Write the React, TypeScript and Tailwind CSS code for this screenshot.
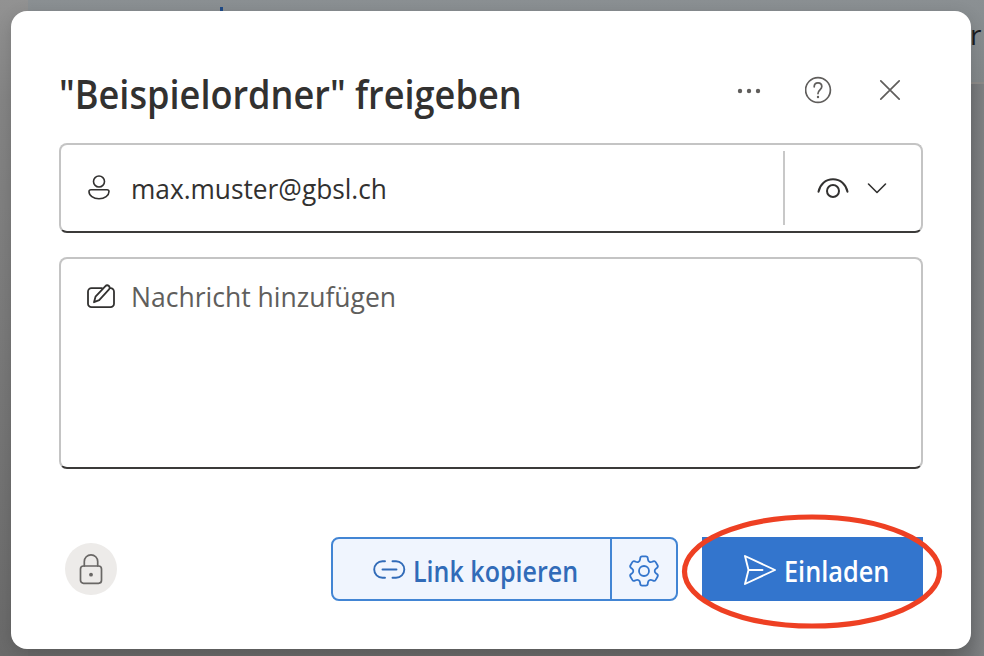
import type { ReactNode } from "react";

type IconProps = { children: ReactNode; className?: string; width: number; height: number; stroke?: number };

function Icon({ children, className = "", width, height, stroke = 1.6 }: IconProps) {
  return (
    <svg
      width={width}
      height={height}
      viewBox={`0 0 ${width} ${height}`}
      fill="none"
      stroke="currentColor"
      strokeWidth={stroke}
      strokeLinecap="round"
      strokeLinejoin="round"
      className={`block shrink-0 ${className}`}
    >
      {children}
    </svg>
  );
}

// Outline of a six-tooth gear with softened corners.
function gearPath(c: number) {
  const pts: [number, number][] = [];
  for (let k = 0; k < 6; k++) {
    for (const [r, d] of [[10.8, -22], [15, -14], [15, 14], [10.8, 22]]) {
      const a = ((k * 60 - 90 + d) * Math.PI) / 180;
      pts.push([c + r * Math.cos(a), c + r * Math.sin(a)]);
    }
  }
  const toward = (p: [number, number], q: [number, number]) => {
    const l = Math.hypot(q[0] - p[0], q[1] - p[1]);
    const t = Math.min(1.8, l / 2) / l;
    return `${(p[0] + (q[0] - p[0]) * t).toFixed(2)} ${(p[1] + (q[1] - p[1]) * t).toFixed(2)}`;
  };
  return (
    pts
      .map((p, i) => {
        const prev = pts[(i + pts.length - 1) % pts.length];
        const next = pts[(i + 1) % pts.length];
        return `${i ? "L" : "M"}${toward(p, prev)}Q${p[0].toFixed(2)} ${p[1].toFixed(2)} ${toward(p, next)}`;
      })
      .join("") + "Z"
  );
}

function Header() {
  return (
    <header className="flex h-[84px] items-start justify-between">
      <h1 className="mt-[7px] w-[470px] origin-left scale-x-[0.903] text-[40px] leading-[56px] font-semibold whitespace-nowrap text-[#323130]">
        "Beispielordner" freigeben
      </h1>
      <div className="mr-[21px] flex items-center pt-[16px] text-[#605e5c]">
        <Icon width={30} height={30} className="mr-[41px]">
          <g fill="currentColor" stroke="none">
            <circle cx="6" cy="16" r="2.2" />
            <circle cx="15" cy="16" r="2.2" />
            <circle cx="24" cy="16" r="2.2" />
          </g>
        </Icon>
        <Icon width={28} height={30} className="mr-[45px]" stroke={1.7}>
          <circle cx="13" cy="15" r="12.4" />
          <path d="M9.2 11.8c0-2.5 1.6-4 3.8-4s3.8 1.5 3.8 3.8c0 3.3-3.8 3.5-3.8 7" />
          <circle cx="13" cy="22" r="1.2" fill="currentColor" stroke="none" />
        </Icon>
        <Icon width={24} height={30} stroke={1.7}>
          <path d="M2.8 5.800l18.400 18.400M21.200 5.800L2.800 24.200" />
        </Icon>
      </div>
    </header>
  );
}

function Recipient() {
  return (
    <div className="flex h-[90px] items-center rounded-[8px] border-2 border-[#c4c4c4] border-b-[#3b3a39] text-[#323130]">
      <Icon width={26} height={28} className="ml-[25px]">
        <circle cx="13" cy="7.500" r="5.500" />
        <path d="M5 15.800h16c1.300 0 2 .8 2 1.800 0 4-4.300 7.200-10 7.200S3 21.600 3 17.600c0-1 .7-1.800 2-1.800z" />
      </Icon>
      <span className="ml-[19px] w-[300px] origin-left scale-x-[0.938] text-[28px] whitespace-nowrap">max.muster@gbsl.ch</span>
      <div className="ml-auto flex h-[74px] w-[138px] items-center border-l-2 border-[#c8c8c8]">
        <Icon width={34} height={24} className="ml-[31px]" stroke={2}>
          <path d="M2.500 15.700C4 8.200 9.500 3.200 17 3.200s13 5 14.500 12.500" />
          <circle cx="17" cy="15" r="6" />
        </Icon>
        <Icon width={24} height={24} className="ml-[15px]" stroke={1.6}>
          <path d="M3.500 8l8.500 8.500L20.500 8" />
        </Icon>
      </div>
    </div>
  );
}

function Message() {
  return (
    <div className="mt-[24px] flex h-[212px] items-start rounded-[8px] border-2 border-[#c4c4c4] border-b-[#3b3a39] pt-[18px]">
      <Icon width={32} height={30} className="ml-[24px] mt-[5px] text-[#323130]" stroke={1.8}>
        <path d="M17 6.200H6.500a3.500 3.500 0 0 0-3.500 3.500v12a3.500 3.500 0 0 0 3.500 3.500h19a3.500 3.500 0 0 0 3.500-3.500v-12a3.500 3.500 0 0 0-3.500-3.500" />
        <path d="M9 20.200l1.500-5.500L20.200 4.300c1.100-1.200 2.700-1.200 3.700-.3s1 2.500-.1 3.700L14.200 18.200z" />
      </Icon>
      <span className="ml-[14px] w-[400px] origin-left scale-x-[0.947] text-[28px] leading-[38px] whitespace-nowrap text-[#605e5c]">
        Nachricht hinzufügen
      </span>
    </div>
  );
}

function Footer() {
  return (
    <footer className="mt-[68px] flex h-[64px] items-center">
      <div className="ml-[6px] flex size-[52px] items-center justify-center rounded-full bg-[#edebe9] text-[#696765]">
        <Icon width={28} height={34} stroke={1.7}>
          <rect x="3.500" y="14" width="21" height="17.300" rx="3" />
          <path d="M7.300 14V9.500a6.700 6.700 0 0 1 13.400 0V14" />
          <circle cx="14" cy="22.700" r="1.900" fill="currentColor" stroke="none" />
        </Icon>
      </div>
      <div className="ml-auto flex h-[64px] w-[347px] rounded-[8px] border-2 border-[#4285d4] bg-[#f0f5fe] text-[#316bb8]">
        <button className="flex w-[277px] items-center pl-[39px]">
          <Icon width={34} height={22} stroke={1.9} className="mt-[2px]">
            <path d="M13 2.200H10.500a8 8 0 0 0 0 16.600H13M20.500 2.200H24a8 8 0 0 1 0 16.600h-3.500M10.500 10.500h14" />
          </Icon>
          <span className="mt-[3px] ml-[7px] w-[160px] origin-left scale-x-[0.894] text-left text-[28px] font-semibold whitespace-nowrap">Link kopieren</span>
        </button>
        <button className="flex flex-1 items-center justify-center border-l-2 border-[#4285d4]">
          <Icon width={32} height={32} stroke={1.8} className="mt-[3px] text-[#3375cc]">
            <circle cx="16" cy="16" r="5" />
            <path d={gearPath(16)} />
          </Icon>
        </button>
      </div>
      <div className="relative ml-[24px]">
        <button className="flex h-[64px] w-[221px] items-center bg-[#3375cd] pl-[40px] text-white">
          <Icon width={34} height={32} stroke={1.9} className="mt-[2px]">
            <path d="M3 2L33 16 3 30 6.500 16z M6.500 16h14" />
          </Icon>
          <span className="mt-[3px] ml-[8px] w-[110px] origin-left scale-x-[0.903] text-left text-[28px] font-semibold whitespace-nowrap">Einladen</span>
        </button>
        <svg width="264" height="120" viewBox="0 0 264 120" fill="none" className="pointer-events-none absolute -top-[25px] -left-[22px] max-w-none">
          <ellipse cx="132" cy="59.500" rx="127.500" ry="54.500" stroke="#ee4023" strokeWidth="5.200" />
        </svg>
      </div>
    </footer>
  );
}

export default function App() {
  return (
    <div className="relative h-[656px] w-[984px] overflow-hidden bg-[linear-gradient(to_bottom,#8b9093_0,#83888a_70px,#7c8184_150px,#737678_400px,#686868_656px)] font-['Open_Sans','Noto_Sans',sans-serif]">
      <div className="absolute top-0 left-0 h-full w-[28px] bg-[linear-gradient(to_bottom,#929292_0,#858585_100px,#777_400px,#6a6a6a_656px)]" />
      <div className="absolute top-[83px] right-0 h-[573px] w-[40px] bg-[linear-gradient(to_right,#686868,#727476_65%,#7e8082)]" />
      <div className="absolute top-[82px] right-0 h-[2px] w-[14px] bg-[#8b8987]" />
      <div className="absolute top-[7px] left-[220px] h-[6px] w-[3px] bg-[#204b87]" />
      <span className="absolute top-[16px] left-[970px] text-[28px] leading-[36px] font-medium text-[#1b1c1d]">r</span>
      <main className="relative mt-[11px] ml-[11px] h-[638px] w-[960px] rounded-[16px] bg-white px-[48px] pt-[48px] shadow-[0_4px_16px_rgba(0,0,0,0.15)]">
        <Header />
        <Recipient />
        <Message />
        <Footer />
      </main>
    </div>
  );
}
